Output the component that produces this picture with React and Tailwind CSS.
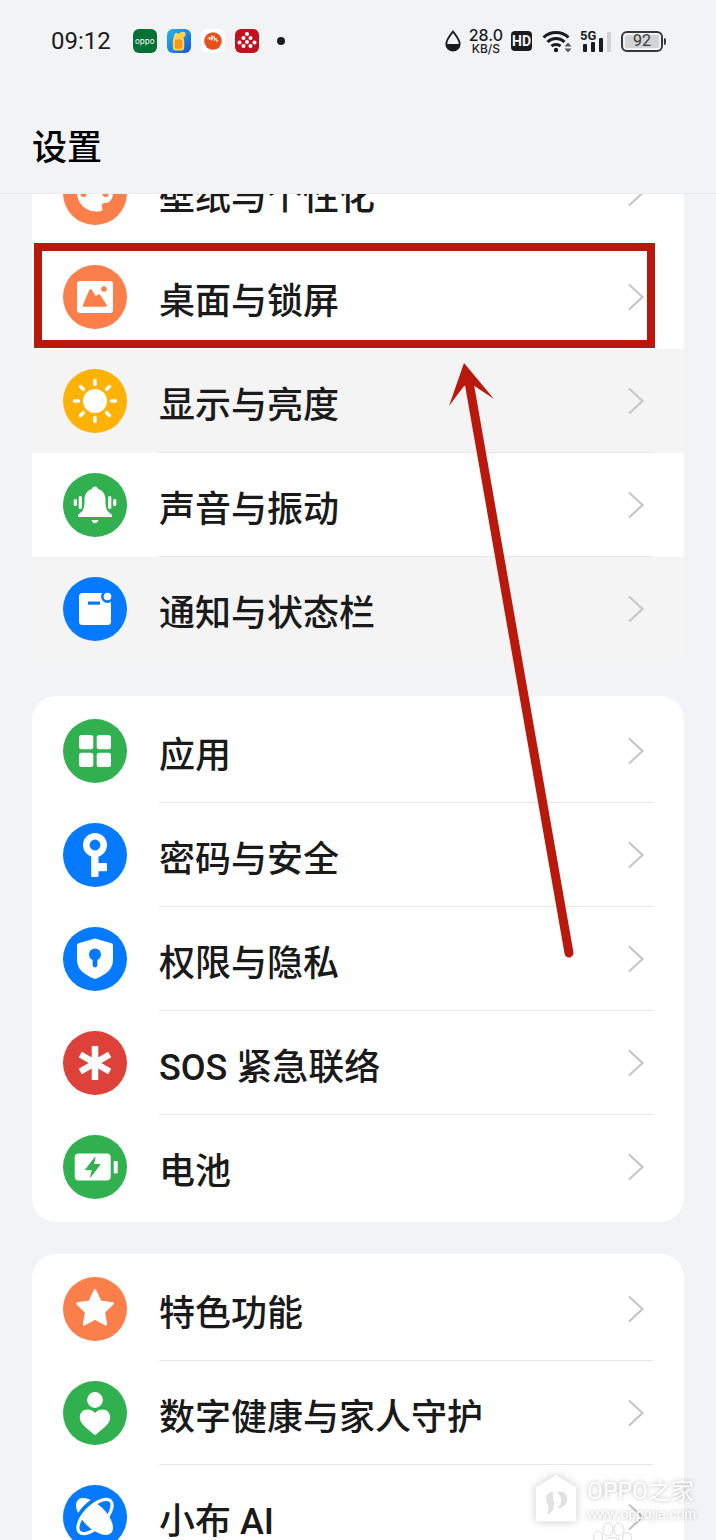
import { useId } from "react";

const ORANGE = "#fb7f4a";
const YELLOW = "#fdb205";
const GREEN = "#31b050";
const BLUE = "#057aff";
const RED = "#de403a";

const PaletteIcon = () => (
  <>
    <path
      d="M32 13c-11 0-18 8-18 18.500S22 50.500 34 50.500c4.500 0 6.500-1 5-4-1-2.500 0-4.500 3-4.500 5 0 8-4 8-10.500C50 21 43 13 32 13z"
      fill="#fff"
    />
    <circle cx="20.500" cy="33" r="3" fill={ORANGE} />
    <circle cx="42.500" cy="33" r="3" fill={ORANGE} />
    <circle cx="26" cy="22" r="3" fill={ORANGE} />
    <circle cx="38" cy="22" r="3" fill={ORANGE} />
  </>
);

const PictureIcon = () => (
  <>
    <rect x="14" y="16" width="36" height="32" rx="3" fill="#fff" />
    <path
      d="M21 40.500l6.500-15 5 7.500 3.500-2.500 6.500 10z"
      fill={ORANGE}
      stroke={ORANGE}
      strokeWidth="2.500"
      strokeLinejoin="round"
    />
    <circle cx="41" cy="24" r="2.800" fill={ORANGE} />
  </>
);

const SunIcon = () => (
  <>
    <circle cx="32" cy="32" r="12" fill="#fff" />
    {[0, 45, 90, 135, 180, 225, 270, 315].map((deg) => (
      <path
        key={deg}
        d="M32 11.500v4"
        stroke="#fff"
        strokeWidth="3.500"
        strokeLinecap="round"
        transform={`rotate(${deg} 32 32)`}
      />
    ))}
  </>
);

const BellIcon = () => (
  <g fill="#fff">
    <path d="M32 13.500c1.600 0 2.800 1 3.100 2.500C40 17.500 42.500 21.500 42.500 27c0 7 .5 10.500 5 13.500 1 .8 1.500 1.500 1.500 2.500 0 .7-.4 1-1 1H16c-.6 0-1-.3-1-1 0-1 .5-1.700 1.500-2.500C21 37.500 21.500 34 21.500 27c0-5.500 2.500-9.500 7.400-11 .3-1.500 1.500-2.500 3.100-2.500z" />
    <path d="M28.500 47h7c-.5 2-1.700 3.200-3.500 3.200S29 49 28.500 47z" />
    <rect x="15.700" y="23" width="3.200" height="13" rx="1.500" />
    <rect x="10.700" y="26" width="3.200" height="7" rx="1.500" />
    <rect x="45.100" y="23" width="3.200" height="13" rx="1.500" />
    <rect x="50.100" y="26" width="3.200" height="7" rx="1.500" />
  </g>
);

const NoticeIcon = () => (
  <>
    <rect x="16" y="16" width="32" height="32" rx="3.500" fill="#fff" />
    <rect x="25" y="24.500" width="12" height="3.200" fill={BLUE} />
    <circle cx="44.500" cy="19.500" r="6.500" fill={BLUE} />
    <circle cx="44.500" cy="19.500" r="3.800" fill="#fff" />
  </>
);

const AppsIcon = () => (
  <g fill="#fff">
    <rect x="16" y="16" width="14.300" height="14.300" rx="2.500" />
    <rect x="33.700" y="16" width="14.300" height="14.300" rx="2.500" />
    <rect x="16" y="33.700" width="14.300" height="14.300" rx="2.500" />
    <rect x="33.700" y="33.700" width="14.300" height="14.300" rx="2.500" />
  </g>
);

const KeyIcon = () => (
  <>
    <circle cx="32" cy="22" r="8.700" fill="none" stroke="#fff" strokeWidth="6.600" />
    <path
      d="M28.200 32h7.300v8H43c.6 0 1 .4 1 1v6.300c0 .6-.4 1-1 1h-7.500V53c0 .6-.4 1-1 1h-5.300c-.6 0-1-.4-1-1z"
      fill="#fff"
    />
  </>
);

const ShieldIcon = () => (
  <>
    <path
      d="M32 11.500l16.500 4.700c.9.300 1.500 1 1.500 2V33c0 9-7 15-18 19-11-4-18-10-18-19V18.200c0-1 .6-1.700 1.500-2z"
      fill="#fff"
    />
    <circle cx="32" cy="27.500" r="6" fill={BLUE} />
    <path d="M32 30v8" stroke={BLUE} strokeWidth="4.800" strokeLinecap="round" />
  </>
);

const SosIcon = () => (
  <path
    d="M32 15v34M17.300 23.500l29.400 17M46.700 23.500l-29.400 17"
    stroke="#fff"
    strokeWidth="6.500"
  />
);

const BatteryIcon = () => (
  <>
    <rect x="11.700" y="18.500" width="36" height="27" rx="4" fill="#fff" />
    <rect x="50.700" y="26" width="4" height="12.500" rx=".8" fill="#fff" />
    <path
      d="M32 22.500l-9.500 12.200h7L27.500 42 37 29.500h-6.500z"
      fill={GREEN}
      stroke={GREEN}
      strokeLinejoin="round"
    />
  </>
);

const StarIcon = () => (
  <path
    d="M32 13.500l5.400 11.200 12.200 1.800-8.800 8.600 2.100 12.200L32 41.500l-10.900 5.800 2.100-12.200-8.800-8.600 12.200-1.800z"
    fill="#fff"
    stroke="#fff"
    strokeWidth="2.500"
    strokeLinejoin="round"
  />
);

const CareIcon = () => (
  <g fill="#fff">
    <circle cx="32" cy="19" r="7.900" />
    <path d="M32 32c2-2.400 4.500-3.500 7.500-3.500 4.500 0 7.700 3.300 7.700 8 0 5.500-5 9.300-14.200 17-.7.600-1.300.6-2 0-9.200-7.700-14.200-11.500-14.200-17 0-4.700 3.200-8 7.700-8 3 0 5.500 1.100 7.500 3.500z" />
  </g>
);

const BreenoIcon = () => (
  <>
    <ellipse cx="31.500" cy="31.500" rx="23.500" ry="11.500" fill="#fff" transform="rotate(45 31.500 31.500)" />
    <ellipse
      cx="32"
      cy="31.500"
      rx="23"
      ry="13.500"
      fill="none"
      stroke={BLUE}
      strokeWidth="4"
      strokeDasharray="58 200"
      strokeDashoffset="-58"
      transform="rotate(-45 32 31.500)"
    />
    <ellipse
      cx="32"
      cy="31.500"
      rx="22"
      ry="10"
      fill="none"
      stroke="#fff"
      strokeWidth="3.200"
      transform="rotate(-45 32 31.500)"
    />
  </>
);

const groups = [
  {
    // scrolled halfway under the title bar
    className: "-mt-[53px] pb-[3px]",
    items: [
      { label: "壁纸与个性化", color: ORANGE, Icon: PaletteIcon, bg: "bg-white" },
      { label: "桌面与锁屏", color: ORANGE, Icon: PictureIcon, bg: "bg-white", marked: true },
      { label: "显示与亮度", color: YELLOW, Icon: SunIcon, bg: "bg-[#f4f4f4]", line: true },
      { label: "声音与振动", color: GREEN, Icon: BellIcon, bg: "bg-white", line: true },
      { label: "通知与状态栏", color: BLUE, Icon: NoticeIcon, bg: "bg-[#f4f4f4]" },
    ],
  },
  {
    className: "rounded-3xl bg-white py-[3px]",
    items: [
      { label: "应用", color: GREEN, Icon: AppsIcon, line: true },
      { label: "密码与安全", color: BLUE, Icon: KeyIcon, line: true },
      { label: "权限与隐私", color: BLUE, Icon: ShieldIcon, line: true },
      { label: "SOS 紧急联络", color: RED, Icon: SosIcon, line: true },
      { label: "电池", color: GREEN, Icon: BatteryIcon },
    ],
  },
  {
    className: "rounded-t-3xl bg-white pt-[3px]",
    items: [
      { label: "特色功能", color: ORANGE, Icon: StarIcon, line: true },
      { label: "数字健康与家人守护", color: GREEN, Icon: CareIcon, line: true },
      { label: "小布 AI", color: BLUE, Icon: BreenoIcon },
    ],
  },
];

const Row = ({ label, color, Icon, bg, line, marked }) => (
  <li className={`relative ${bg || ""}`}>
    <a href="#" className="flex h-26 items-center gap-8 px-[31px]">
      <svg viewBox="0 0 64 64" className="size-16 shrink-0" aria-hidden="true">
        <circle cx="32" cy="32" r="32" fill={color} />
        <Icon />
      </svg>
      <div
        className={`flex h-full grow items-center justify-between border-b pr-2 ${
          line ? "border-[#e6e6e6]" : "border-transparent"
        }`}
      >
        <span className="pt-2.5 text-[36px] leading-[52px] font-medium whitespace-nowrap">
          {label}
        </span>
        <svg viewBox="0 0 18 28" className="h-7 w-[18px] shrink-0" aria-hidden="true">
          <path d="M2 1.500L15.500 14 2 26.500" fill="none" stroke="#c6c6c6" strokeWidth="2.200" />
        </svg>
      </div>
    </a>
    {marked && (
      <div className="pointer-events-none absolute -top-0.5 right-[29px] bottom-px left-0.5 border-8 border-[#b9190c]" />
    )}
  </li>
);

const StatusBar = () => {
  const juice = useId();
  return (
    <div className="flex h-[82px] items-center justify-between pr-[50px] pl-[51px] text-[#1b1c1e]">
      <div className="flex items-center gap-[10px]">
        <span className="mr-3 font-['Roboto',sans-serif] text-2xl leading-8">09:12</span>
        <div className="flex size-6 items-center justify-center rounded-md bg-[#067135] font-['Inter',sans-serif] text-[8px] leading-none text-white">
          oppo
        </div>
        <svg viewBox="0 0 24 24" className="size-6" aria-hidden="true">
          <defs>
            <linearGradient id={juice} x1="0" y1="0" x2="1" y2="1">
              <stop offset="0" stopColor="#22b4f0" />
              <stop offset="1" stopColor="#1559d6" />
            </linearGradient>
          </defs>
          <rect width="24" height="24" rx="6" fill={`url(#${juice})`} />
          <path
            d="M8 4.500c1.500-1.500 3 0 4 .5 1-2 4-3 6-1.500 1.500 1.500.5 4-1.500 5 1 3.500 1 8 .5 11-.3 1.500-1 2-2.500 2h-6c-1.500 0-2.300-.7-2.500-2-.4-3.500-.4-8 .5-11 .5-1.500.5-3 1.500-4z"
            fill="#ffd24a"
          />
          <path d="M8 11c2-1 5-1 7 0 .5 3 .4 6 0 8-1.500 1-5.500 1-7 0-.5-2.500-.5-5.500 0-8z" fill="#f7951e" />
        </svg>
        <svg viewBox="0 0 24 24" className="size-6" aria-hidden="true">
          <rect width="24" height="24" rx="6" fill="#fff" />
          <circle cx="12" cy="12" r="8.800" fill="#e8501c" />
          <path
            d="M6.500 9.500l1.500-1.500.5 3 2.500-4.500-.5 5 2.500-4.500.5 5 1.500-3 .8 3.500 1.500-1"
            fill="none"
            stroke="#fff"
            strokeWidth=".9"
          />
        </svg>
        <svg viewBox="0 0 24 24" className="size-6" aria-hidden="true">
          <rect width="24" height="24" rx="6" fill="#c4101e" />
          <g fill="#fff">
            <circle cx="12" cy="5" r="2" />
            <circle cx="8.500" cy="9" r="2" />
            <circle cx="15.500" cy="9" r="2" />
            <circle cx="4.500" cy="13.500" r="2" />
            <circle cx="12" cy="13" r="2" />
            <circle cx="19.500" cy="13.500" r="2" />
            <circle cx="8.500" cy="17" r="2" />
            <circle cx="15.500" cy="17" r="2" />
          </g>
        </svg>
        <span className="ml-2 size-2 rounded-full bg-[#1b1c1e]" />
      </div>

      <div className="flex items-center gap-2">
        <svg viewBox="0 0 16 22" className="h-[22px] w-4" aria-hidden="true">
          <path
            d="M8 1.500C5 5.500 1.300 9.800 1.300 14a6.700 6.700 0 0013.400 0C14.700 9.800 11 5.500 8 1.500z"
            fill="none"
            stroke="#1b1c1e"
            strokeWidth="1.800"
          />
          <path d="M1.300 14a6.700 6.700 0 0013.400 0z" fill="#1b1c1e" />
        </svg>
        <div className="flex flex-col items-center font-['Inter',sans-serif] font-medium">
          <span className="text-base leading-4">28.0</span>
          <span className="text-xs leading-3">KB/S</span>
        </div>
        <span className="flex h-5 w-[21px] items-center justify-center rounded-sm bg-[#1b1c1e] font-['Roboto',sans-serif] text-sm leading-none font-bold text-[#f2f3f5]">
          HD
        </span>
        <svg viewBox="0 0 30 24" className="ml-0.5 h-6 w-[30px]" aria-hidden="true">
          <g fill="none" stroke="#1b1c1e" strokeWidth="3">
            <path d="M1.500 8.500a18 18 0 0125 0" />
            <path d="M5.500 13a12 12 0 0117 0" />
            <path d="M9.500 17.200a6.500 6.500 0 019 0" />
          </g>
          <circle cx="14" cy="21" r="2.200" fill="#1b1c1e" />
          <path d="M22.500 17.500l3.500-4 3.500 4zM22.500 19.500l3.500 4 3.500-4z" fill="#55575a" />
        </svg>
        <div className="flex items-end gap-1">
          <div className="flex w-[15px] flex-col">
            <span className="font-['Roboto',sans-serif] text-[13px] leading-3 font-bold">5G</span>
            <div className="flex items-end gap-1 pl-[3px]">
              <span className="h-2 w-1 rounded-[1px] bg-[#1b1c1e]" />
              <span className="h-2.5 w-1 rounded-[1px] bg-[#1b1c1e]" />
            </div>
          </div>
          <span className="h-3.5 w-1 rounded-[1px] bg-[#1b1c1e]" />
          <span className="h-5 w-1 rounded-[1px] bg-[#d0d1d3]" />
        </div>
        <div className="ml-0.5 flex items-center gap-px">
          <div className="flex h-[21px] w-[42px] rounded-md border-2 border-[#37383a] p-0.5">
            <span className="flex grow items-center justify-center rounded-xs bg-[#d2d3d5] font-['Roboto',sans-serif] text-base leading-none text-[#37383a]">
              92
            </span>
          </div>
          <span className="h-[7px] w-0.5 rounded-r-xs bg-[#37383a]" />
        </div>
      </div>
    </div>
  );
};

// hand-drawn pointer going up to the marked row
const Arrow = () => (
  <svg
    viewBox="0 0 140 600"
    className="pointer-events-none absolute top-[362px] left-[442px] h-[600px] w-[140px]"
    aria-hidden="true"
  >
    <path d="M22 1l30 36-21-14-9 1-15 20z" fill="#b9190c" />
    <path d="M27 20L127 591" stroke="#b9190c" strokeWidth="9" strokeLinecap="round" />
  </svg>
);

const Watermark = () => (
  <div className="pointer-events-none absolute right-5 bottom-[18px] flex items-center gap-2.5">
    <svg
      viewBox="0 0 42 48"
      className="h-12 w-[42px] drop-shadow-[0_0_4px_rgba(0,0,0,0.22)]"
      aria-hidden="true"
    >
      <path
        d="M21 1l19 11.500c.8.500 1.200 1 1.200 2V44a3.500 3.500 0 01-3.500 3.500H4.300A3.500 3.500 0 01.8 44V14.500c0-1 .4-1.500 1.200-2z"
        fill="#fff"
      />
      <path
        d="M19 18.500c-4-2-8.500 2-8 7 .3 4 3 5 2.500 9-.2 2-.7 4-1.500 6 5-1.500 7.500-6 7-12-.3-4-2.500-7 0-10z"
        fill="#e1e1e1"
      />
      <path
        d="M22 18.500c5-2.500 10 .5 10 6.500s-4.500 9.500-10.500 9c3.500-1.500 4.500-4 4.500-8 0-3.500-1.500-6-4-7.500z"
        fill="#e1e1e1"
      />
    </svg>
    <div className="flex flex-col pt-1 whitespace-nowrap text-white text-shadow-[0_0_4px_rgba(0,0,0,0.3)]">
      <span className="text-[23px] leading-7">OPPO之家</span>
      <span className="font-['Liberation_Sans',sans-serif] text-sm leading-4">www.oppojia.com</span>
    </div>
  </div>
);

const Paw = () => (
  <svg
    viewBox="0 0 40 18"
    className="pointer-events-none absolute bottom-0 left-[592px] h-[18px] w-10"
    aria-hidden="true"
  >
    <g fill="#fff" stroke="#dcdcdc">
      <ellipse cx="6" cy="15" rx="4.500" ry="6" />
      <ellipse cx="16" cy="7.500" rx="5" ry="6.500" />
      <ellipse cx="27" cy="7.500" rx="5" ry="6.500" />
      <ellipse cx="35" cy="16" rx="4.500" ry="5.500" />
      <path d="M12 20c3-6 14-6 18 0" />
    </g>
  </svg>
);

const App = () => {
  return (
    <div className="relative flex h-screen flex-col overflow-hidden bg-[#f2f3f5] font-['Roboto','Noto_Sans_CJK_SC',sans-serif] text-[#1a1a1a]">
      <header className="shrink-0 border-b border-[#e9eaec]">
        <StatusBar />
        <h1 className="px-8 pt-[41px] pb-[18px] text-[35px] leading-[52px] font-medium text-black">
          设置
        </h1>
      </header>
      <main className="flex min-h-0 grow flex-col gap-8 overflow-hidden px-8">
        {groups.map((group, i) => (
          <ul key={i} className={group.className}>
            {group.items.map((item) => (
              <Row key={item.label} {...item} />
            ))}
          </ul>
        ))}
      </main>
      <Arrow />
      <Paw />
      <Watermark />
    </div>
  );
};

export default App;
